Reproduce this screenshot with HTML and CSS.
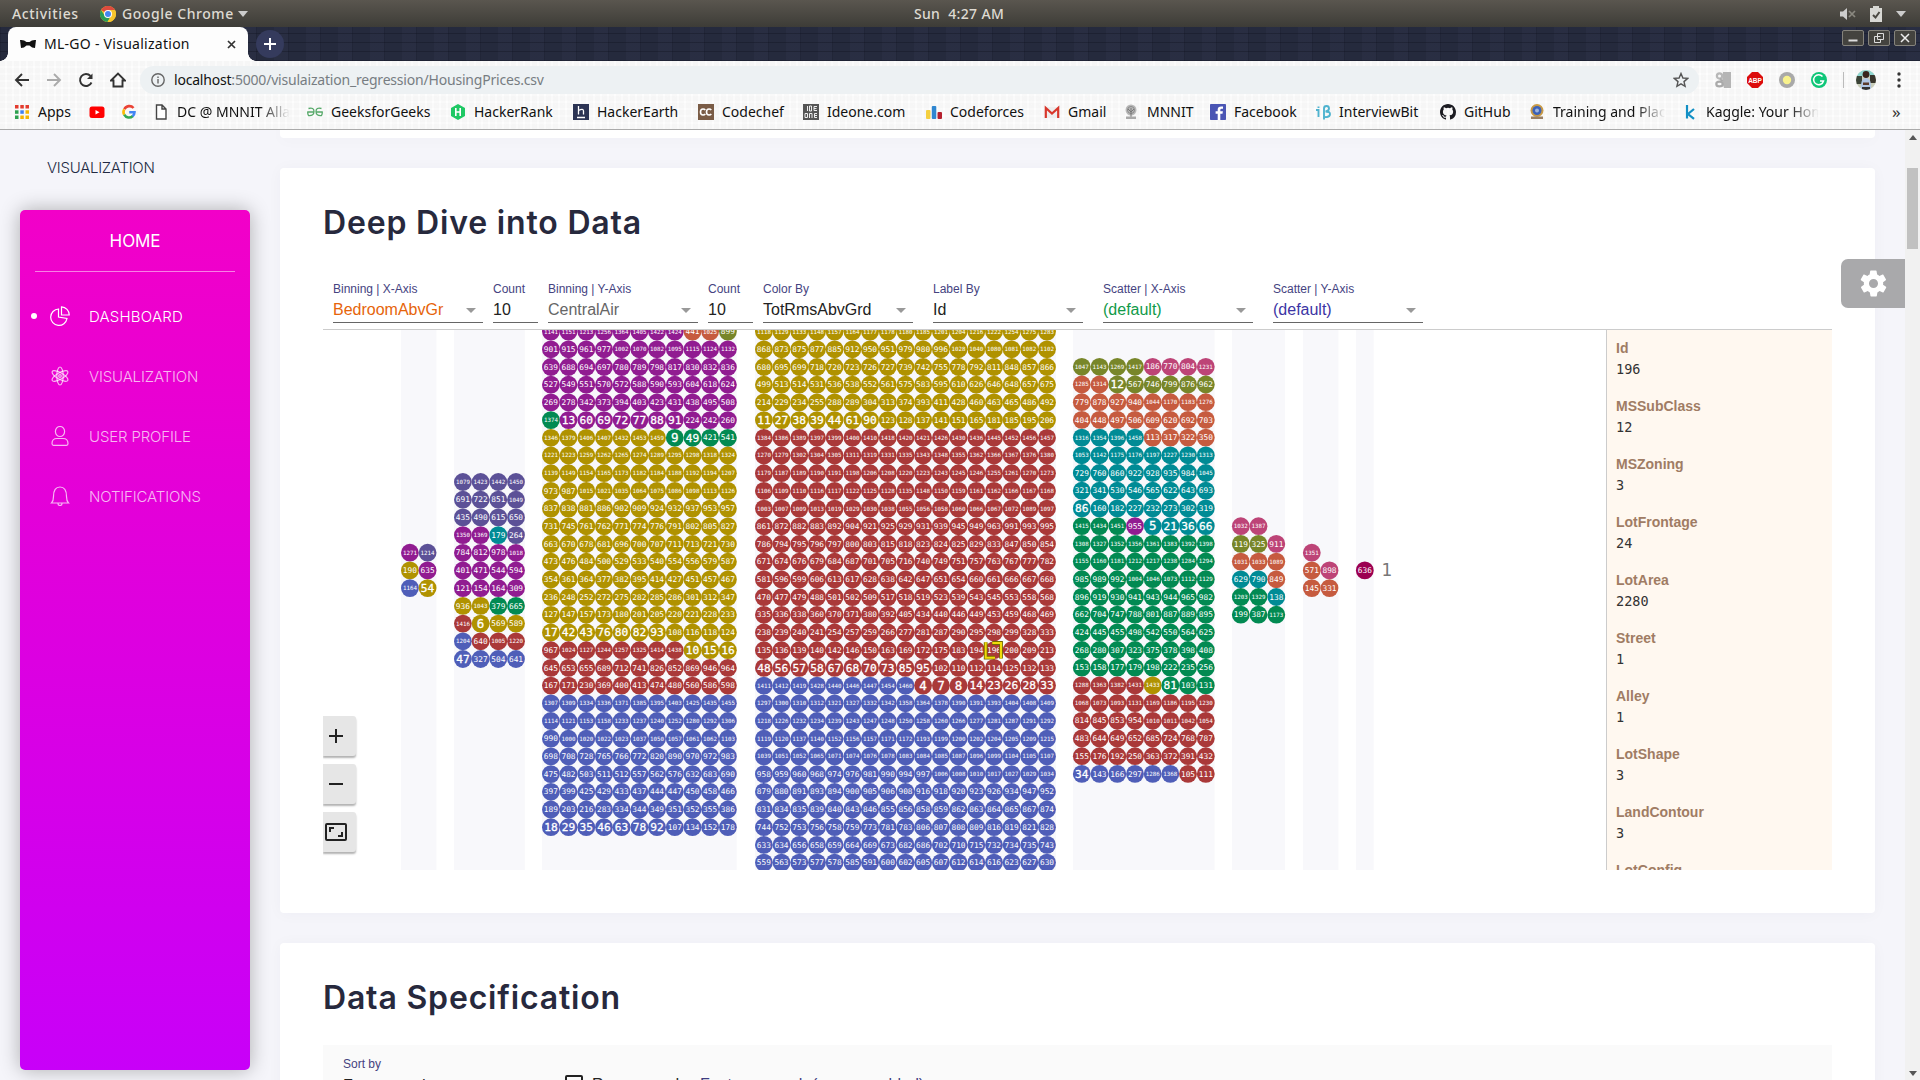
FILE: index.html
```html
<!DOCTYPE html>
<html lang="en">
<head>
<meta charset="utf-8">
<title>ML-GO - Visualization</title>
<link rel="stylesheet" href="styles.css">
</head>
<body>
<header class="topbar">
  <div class="top-left">
    <span class="activities">Activities</span>
    <svg class="chrome" viewBox="0 0 16 16"><circle cx="8" cy="8" r="8" fill="#f7c52d"/><path d="M8 8 1 4A8 8 0 0 1 15 4H8Z" fill="#dd4b3e"/><path d="M1 4A8 8 0 0 0 7.500 16L11 10 5 10Z" fill="#2a9d56"/><path d="M8 4H15A8 8 0 0 1 7.500 16L11 10Z" fill="#f7c52d"/><circle cx="8" cy="8" r="4" fill="#fff"/><circle cx="8" cy="8" r="3" fill="#4687f0"/></svg>
    <span class="appname">Google Chrome</span>
    <i class="caret"></i>
  </div>
  <span class="clock">Sun&nbsp; 4:27 AM</span>
  <div class="top-right">
    <svg class="vol" width="18" height="14" viewBox="0 0 18 14"><path d="M1 4.500H4L8 1V13L4 9.500H1Z" fill="#ccc"/><path d="m10 4 6 6m0-6-6 6" stroke="#8a8880" stroke-width="1.700"/></svg>
    <svg class="batt" width="12" height="16" viewBox="0 0 12 16"><path d="M3 0H9V2H12V16H0V2H3Z" fill="#d8d8d4"/><path d="m3 9 2.500 2.500L9.500 6" fill="none" stroke="#4a4842" stroke-width="2"/></svg>
    <i class="caret"></i>
  </div>
</header>
<div class="tabstrip">
  <div class="tab">
    <svg width="16" height="10" viewBox="0 0 16 10"><path d="M0 1Q4 .5 6.500 3H9.500Q12 .5 16 1L15 9Q12 9 9.500 6.500H6.500Q4 9 1 9Z" fill="#111"/></svg>
    <span class="tabtitle">ML-GO - Visualization</span>
    <svg class="tabclose" width="9" height="9" viewBox="0 0 9 9"><path d="m1 1 7 7m0-7-7 7" stroke="#333" stroke-width="1.700"/></svg>
  </div>
  <div class="newtab"><svg width="12" height="12" viewBox="0 0 12 12"><path d="M6 0V12M0 6H12" stroke="#fff" stroke-width="2"/></svg></div>
  <div class="winbtns">
    <span class="wb"><svg viewBox="0 0 12 12"><path d="M1.500 8.500H10.500" stroke="#ddd" stroke-width="2"/></svg></span>
    <span class="wb"><svg viewBox="0 0 12 12" fill="none" stroke="#ddd"><path d="M4.500 1.500H10.500V7.500H4.500ZM7.500 7.500V10.500H1.500V4.500H7.500"/></svg></span>
    <span class="wb"><svg viewBox="0 0 12 12"><path d="m2 2 8 8m0-8-8 8" stroke="#eee" stroke-width="1.500"/></svg></span>
  </div>
</div>
<div class="chromebar">
  <div class="navrow">
    <svg class="nav" viewBox="0 0 16 16"><path d="M15 8H2M8 2 2 8l6 6" /></svg>
    <svg class="nav dim" viewBox="0 0 16 16"><path d="M1 8H14M8 2l6 6-6 6"/></svg>
    <svg class="nav" viewBox="0 0 16 16"><path d="M13.500 10.500A6 6 0 1 1 12.500 4"/><path d="M14.500 1.500V7H9Z" fill="#333" stroke="none"/></svg>
    <svg class="nav" viewBox="0 0 16 16"><path d="M1 8.500 8 1.500l7 7H12.500V14.500H3.500V8.500Z"/></svg>
    <div class="urlbar">
      <svg width="14" height="14" viewBox="0 0 14 14" fill="none" stroke="#666" stroke-width="1.400"><circle cx="7" cy="7" r="6.200"/><path d="M7 6V10.500M7 3.400V5"/></svg>
      <span class="url"><b>localhost</b>:5000/visulaization_regression/HousingPrices.csv</span>
      <svg class="star" width="16" height="16" viewBox="0 0 16 16"><path d="m8 1.500 1.900 4.500 4.800.4-3.700 3.200 1.100 4.700L8 11.800l-4.100 2.500L5 9.600 1.300 6.400 6.100 6Z" fill="none" stroke="#555" stroke-width="1.400"/></svg>
    </div>
    <div class="exts">
      <svg viewBox="0 0 16 16"><path d="M8 0H16V16H9L7 10Z" fill="#b5b5b5"/><circle cx="4.500" cy="4" r="2.600" fill="none" stroke="#b8b8b8" stroke-width="2.200"/><ellipse cx="4.500" cy="12" rx="3.200" ry="2.400" fill="none" stroke="#aaa" stroke-width="2.200"/><path d="M5 6.500 7 8.500 5 9.500" fill="none" stroke="#aaa" stroke-width="1.500"/></svg>
      <svg viewBox="0 0 16 16"><path d="M5 0H11L16 5V11L11 16H5L0 11V5Z" fill="#dc0c0c"/><text x="8" y="10.800" text-anchor="middle" class="abp">ABP</text></svg>
      <svg viewBox="0 0 16 16"><circle cx="8" cy="8" r="8" fill="#a9a9a9"/><circle cx="8" cy="8" r="4.200" fill="#f8f28c"/></svg>
      <svg viewBox="0 0 16 16"><circle cx="8" cy="8" r="8" fill="#0fc678"/><path d="M11.500 4.500A5 5 0 1 0 12.500 9H9" fill="none" stroke="#fff" stroke-width="1.500"/></svg>
    </div>
    <i class="vsep"></i>
    <svg class="avatar" viewBox="0 0 20 20"><defs><clipPath id="av"><circle cx="10" cy="10" r="10"/></clipPath></defs><g clip-path="url(#av)"><rect width="20" height="20" fill="#c9cdb9"/><rect width="20" height="6" fill="#8fd6d0"/><rect x="0" y="6" width="6" height="8" fill="#3c4438"/><rect x="14" y="5" width="6" height="8" fill="#39352c"/><circle cx="10" cy="4.500" r="3.400" fill="#38241c"/><path d="M5 20Q4 8 10 8T15 20Z" fill="#b0c6e3"/><path d="M7 12.500h6v2.500H7Z" fill="#5a3b2c"/><path d="M6 17h8v3H6Z" fill="#333"/></g></svg>
    <svg class="kebab" width="4" height="16" viewBox="0 0 4 16" fill="#333"><circle cx="2" cy="2" r="1.700"/><circle cx="2" cy="8" r="1.700"/><circle cx="2" cy="14" r="1.700"/></svg>
  </div>
  <nav class="bookmarks">
    <a class="bm w-apps"><svg viewBox="0 0 16 16"><g fill="#e33b2e"><path d="M1 1h3.500v3.500H1zM6.300 1h3.500v3.500H6.300zM11.500 1H15v3.500h-3.500z"/></g><path d="M1 6.300h3.500v3.500H1z" fill="#2da14f"/><path d="M6.300 6.300h3.500v3.500H6.300z" fill="#4080f0"/><path d="M11.500 6.300H15v3.500h-3.500zM6.300 11.500h3.500V15H6.300zM11.500 11.500H15V15h-3.500z" fill="#f5b400"/><path d="M1 11.500h3.500V15H1z" fill="#2da14f"/></svg><span>Apps</span></a>
    <a class="bm w-yt"><svg viewBox="0 0 16 16"><rect y="2.500" x=".5" width="15" height="11.500" rx="2.500" fill="#f00"/><path d="m6.500 6 4 2.300-4 2.300Z" fill="#fff"/></svg></a>
    <a class="bm w-gg"><svg viewBox="0 0 16 16" fill="none" stroke-width="2.600"><path d="M12.500 4A5.500 5.500 0 0 0 3.400 5.200" stroke="#ea4335"/><path d="M3.200 5.300a5.500 5.500 0 0 0 0 5.400" stroke="#fbbc05"/><path d="M3.200 10.700a5.500 5.500 0 0 0 8.600 1.300" stroke="#34a853"/><path d="M11.600 12.200A5.500 5.500 0 0 0 13.500 8.200H8.200" stroke="#4285f4"/></svg></a>
    <a class="bm fade w-dc"><svg viewBox="0 0 16 16"><path d="M3.500 1H9l4 4V15H3.500ZM9 1V5h4" fill="#fff" stroke="#444" stroke-width="1.400"/></svg><span>DC @ MNNIT Alla</span></a>
    <a class="bm w-gfg"><svg viewBox="0 0 16 16" fill="none" stroke="#55a868" stroke-width="1.300"><path d="M1.500 4.500Q7 3 7 7.500T1.500 11.500Q.5 9.500.8 8H7M14.500 4.500Q9 3 9 7.500t5.500 4Q15.500 9.500 15.200 8H9"/></svg><span>GeeksforGeeks</span></a>
    <a class="bm w-hr"><svg viewBox="0 0 16 16"><path d="m8 0 7 4v8l-7 4-7-4V4Z" fill="#1ec864"/><path d="M5.800 4V12M10.200 4V12M5.800 8h4.400" stroke="#fff" stroke-width="1.600"/></svg><span>HackerRank</span></a>
    <a class="bm w-he"><svg viewBox="0 0 16 16"><rect width="16" height="16" fill="#2c3454"/><path d="M5.500 2V10.500M5.500 6.500Q10.500 4 10.500 7V10.500M4 13.500h8" stroke="#fff" stroke-width="1.300" fill="none"/></svg><span>HackerEarth</span></a>
    <a class="bm w-cc"><svg viewBox="0 0 16 16"><rect width="16" height="16" fill="#7a5c46"/><path d="M7.300 6Q6.500 5 5 5 2.500 5 2.500 8T5 11q1.500 0 2.300-1M13.300 6Q12.500 5 11 5 8.500 5 8.500 8T11 11q1.500 0 2.300-1" stroke="#fff" stroke-width="1.600" fill="none"/></svg><span>Codechef</span></a>
    <a class="bm w-id"><svg viewBox="0 0 16 16"><rect width="16" height="16" fill="#555"/><path d="M4.500 2V7M6.500 2V7H8.500V2ZM14 2.500H11V6.500H14M11 4.500h2.500M2 9.500H4.500V13.500H2ZM6.500 14V9.500H9V14M14 9.500H11.500V13.500H14M11.500 11.500H14" fill="none" stroke="#eee" stroke-width="1"/></svg><span>Ideone.com</span></a>
    <a class="bm w-cf"><svg viewBox="0 0 16 16"><rect y="6" width="4.500" height="9" rx="1" fill="#f4cf3f"/><rect x="5.800" y="2" width="4.500" height="13" rx="1" fill="#2f86d0"/><rect x="11.500" y="8" width="4.500" height="7" rx="1" fill="#b5202e"/></svg><span>Codeforces</span></a>
    <a class="bm w-gm"><svg viewBox="0 0 16 16"><path d="M1 3H15V14H1Z" fill="#eee"/><path d="M1.800 14V4L8 9.500 14.200 4V14" fill="none" stroke="#d8372c" stroke-width="2.200"/></svg><span>Gmail</span></a>
    <a class="bm w-mn"><svg viewBox="0 0 16 16"><circle cx="8" cy="6" r="5.500" fill="#b9b9b9"/><circle cx="8" cy="6" r="3.500" fill="none" stroke="#888"/><path d="M8 4v9M5 5l3 3 3-3" stroke="#777" fill="none"/><path d="M3 12.500h10V15H3Z" fill="#a9a9a9"/></svg><span>MNNIT</span></a>
    <a class="bm w-fb"><svg viewBox="0 0 16 16"><rect width="16" height="16" rx=".8" fill="#4a55b4"/><path d="M10.300 16V9.800h2.200l.4-2.500h-2.600V6q0-1.200 1.300-1.200H13V2.600Q7.700 1.700 7.700 5.600V7.300H5.600V9.800H7.700V16Z" fill="#fff"/></svg><span>Facebook</span></a>
    <a class="bm w-ib"><svg viewBox="0 0 16 16" fill="none" stroke="#4fb3cf" stroke-width="1.900"><path d="M1 6H3.500V13M3.500 2.500V4M9 15.500V4.500Q9 2 11.500 2T14 4.500 10.500 7.500Q15 7.500 15 10T12 13 9 11.500"/></svg><span>InterviewBit</span></a>
    <a class="bm w-gh"><svg viewBox="0 0 16 16"><path d="M8 0C3.580 0 0 3.580 0 8c0 3.540 2.290 6.530 5.470 7.590.4.070.55-.17.55-.38 0-.19-.01-.82-.01-1.490-2.010.37-2.530-.49-2.690-.94-.09-.23-.48-.94-.82-1.130-.28-.15-.68-.52-.01-.53.63-.01 1.080.58 1.230.82.72 1.210 1.870.87 2.330.66.07-.52.28-.87.51-1.070-1.780-.2-3.640-.89-3.640-3.950 0-.87.31-1.590.82-2.150-.08-.2-.36-1.020.08-2.120 0 0 .67-.21 2.200.82a7.600 7.600 0 0 1 4 0c1.530-1.040 2.200-.82 2.200-.82.44 1.100.16 1.920.08 2.120.51.56.82 1.270.82 2.150 0 3.070-1.870 3.750-3.650 3.950.29.25.54.73.54 1.480 0 1.070-.01 1.930-.01 2.200 0 .21.15.46.55.38A8 8 0 0 0 16 8c0-4.420-3.580-8-8-8Z" fill="#1c1c22"/></svg><span>GitHub</span></a>
    <a class="bm fade w-tr"><svg viewBox="0 0 16 16"><circle cx="8" cy="6.500" r="6.500" fill="#c99a45"/><circle cx="8" cy="6.500" r="4.500" fill="#3c62b8"/><circle cx="8" cy="6.500" r="2" fill="#9fb4dd"/><path d="M2 12.500h12V15H2Z" fill="#9a7f62"/></svg><span>Training and Plac</span></a>
    <a class="bm fade w-kg"><svg viewBox="0 0 16 16"><path d="M5 1V14.500M12 5 6 10l6 4.800" fill="none" stroke="#128fc4" stroke-width="2.200"/></svg><span>Kaggle: Your Hom</span></a>
    <span class="more">»</span>
  </nav>
</div>
<div class="page">
  <aside class="side">
    <div class="crumb">VISUALIZATION</div>
    <div class="menu">
      <div class="home">HOME</div>
      <a class="mi on"><i class="bullet"></i><svg viewBox="0 0 20 20"><path d="M8.500 3A8.200 8.200 0 1 0 17 12.500L8.500 11ZM11.500.8V9H19.200A8 8 0 0 0 11.500.8Z"/></svg><span>DASHBOARD</span></a>
      <a class="mi"><i class="bullet"></i><svg viewBox="0 0 20 20"><ellipse cx="10" cy="10" rx="3.200" ry="9"/><ellipse cx="10" cy="10" rx="3.200" ry="9" transform="rotate(60 10 10)"/><ellipse cx="10" cy="10" rx="3.200" ry="9" transform="rotate(120 10 10)"/><circle cx="10" cy="10" r="1.300"/></svg><span>VISUALIZATION</span></a>
      <a class="mi"><i class="bullet"></i><svg viewBox="0 0 20 20"><ellipse cx="10" cy="5.500" rx="4.600" ry="5"/><path d="M2 17.500Q2 12.500 7 12.500h6q5 0 5 5Q18 19.300 16.500 19.300h-13Q2 19.300 2 17.500Z"/></svg><span>USER PROFILE</span></a>
      <a class="mi"><i class="bullet"></i><svg viewBox="0 0 20 20"><path d="M1.500 17Q3.500 15 3.500 10.500 3.500 1 10 1t6.500 9.500Q16.500 15 18.500 17ZM8 17.500a2 2 0 0 0 4 0"/></svg><span>NOTIFICATIONS</span></a>
    </div>
  </aside>
  <main class="main">
    <section class="card prev"></section>
    <section class="card dive">
      <h2>Deep Dive into Data</h2>
      <div class="controls">
        <div class="f sel"><label>Binning | X-Axis</label><p class="orange">BedroomAbvGr<i></i></p></div>
        <div class="f num"><label>Count</label><p>10</p></div>
        <div class="f sel"><label>Binning | Y-Axis</label><p class="gray">CentralAir<i></i></p></div>
        <div class="f num"><label>Count</label><p>10</p></div>
        <div class="f sel wide"><label>Color By</label><p>TotRmsAbvGrd<i></i></p></div>
        <div class="f sel wide"><label>Label By</label><p>Id<i></i></p></div>
        <div class="f sel wide"><label>Scatter | X-Axis</label><p class="green">(default)<i></i></p></div>
        <div class="f sel wide"><label>Scatter | Y-Axis</label><p class="indigo">(default)<i></i></p></div>
      </div>
      <div class="plot">
        <div class="canvas">
          <svg id="dots" width="1283" height="540" viewBox="323 330 1283 540"></svg>
          <div class="zoom">
            <button><svg viewBox="0 0 24 24"><path d="M12 5V19M5 12H19"/></svg></button>
            <button><svg viewBox="0 0 24 24"><path d="M5 12H19"/></svg></button>
            <button><svg viewBox="0 0 24 24"><rect x="2" y="4" width="20" height="16" rx="1"/><path d="M6 12V8h4M18 12v4h-4"/></svg></button>
          </div>
        </div>
        <dl class="info">
          <dt>Id</dt><dd>196</dd>
          <dt>MSSubClass</dt><dd>12</dd>
          <dt>MSZoning</dt><dd>3</dd>
          <dt>LotFrontage</dt><dd>24</dd>
          <dt>LotArea</dt><dd>2280</dd>
          <dt>Street</dt><dd>1</dd>
          <dt>Alley</dt><dd>1</dd>
          <dt>LotShape</dt><dd>3</dd>
          <dt>LandContour</dt><dd>3</dd>
          <dt>LotConfig</dt>
        </dl>
      </div>
    </section>
    <section class="card spec">
      <h2>Data Specification</h2>
      <div class="overview">
        <div class="sortlabel">Sort by</div>
        <div class="sortrow"><span class="order">Feature order</span><i class="check"></i><span class="rev">Reverse order</span><span class="search">Feature search (regex enabled)</span></div>
      </div>
    </section>
  </main>
  <div class="scroll"><i class="up"></i><b></b><i class="down"></i></div>
  <div class="gear"><svg viewBox="0 0 24 24"><path d="m19.400 13 .1-1-.1-1 2.100-1.600c.2-.2.3-.5.100-.7l-2-3.400c-.1-.2-.4-.3-.6-.2l-2.500 1q-.8-.6-1.700-1l-.4-2.600c0-.3-.2-.5-.5-.5h-4c-.3 0-.5.2-.5.500l-.4 2.600q-.9.400-1.700 1l-2.500-1c-.2-.1-.5 0-.6.200l-2 3.400c-.1.200-.1.500.1.700L4.600 11l-.1 1 .1 1-2.100 1.600c-.2.200-.3.500-.1.700l2 3.400c.1.200.4.300.6.200l2.500-1q.8.600 1.700 1l.4 2.600c0 .3.200.5.500.5h4c.3 0 .5-.2.500-.5l.4-2.600q.9-.4 1.700-1l2.500 1c.2.100.5 0 .6-.2l2-3.400c.1-.2.1-.5-.1-.7ZM12 15.500a3.500 3.500 0 1 1 0-7 3.500 3.500 0 0 1 0 7Z" fill="#fff"/></svg></div>
</div>
<script src="plot.js"></script>
</body>
</html>
```
FILE: plot.js
```js
// Each facet is a column of the binned plot. Rows run top to bottom;
// a letter switches the colour for the ids that follow it.
const COLORS = {
  b: '#4f5eb8', r: '#aa3939', y: '#b09200', g: '#028a52', t: '#008b95',
  p: '#911c91', i: '#5c5197', l: '#788629', o: '#c65b3f', k: '#bd4477', m: '#9c0051'
};
const PITCH = 17.7;
const SIZES = [0, 12.5, 11.2, 7.8, 5.8];
const FACETS = [
  { x: 401, n: 2, y: 552.7, rows: `p 1271 i 1214
y 190 p 635
b 1164 y 54` },
  { x: 454, n: 4, y: 482, rows: `i 1079 1423 1442 1450
i 691 722 851 1049
i 435 490 615 650
p 1350 1369 t 179 i 264
p 784 812 978 1018
p 401 471 544 594
p 121 154 164 309
y 936 1043 g 379 665
r 1416 y 6 569 589
b 1204 r 640 1005 1220
b 47 327 504 641` },
  { x: 542, n: 11, y: 331.6, rows: `p 1141 1151 1213 1256 1364 1405 1422 1424 o 441 1025 l 899
p 901 915 961 977 1002 1070 1082 1095 1115 1124 1132
p 639 688 694 697 780 789 798 817 830 832 836
p 527 549 551 570 572 588 590 593 604 618 624
p 269 278 342 373 394 403 423 431 438 495 508
g 1374 p 13 60 69 72 77 88 91 224 242 260
y 1346 1379 1406 1407 1432 1453 1459 g 9 49 421 541
y 1221 1223 1259 1262 1265 1274 1289 1295 1298 1318 1324
y 1139 1149 1154 1165 1173 1182 1184 1188 1192 1194 1207
y 973 987 1015 1021 1035 1064 1075 1086 1098 1113 1126
y 837 838 881 886 902 909 924 932 937 953 957
y 731 745 761 762 771 774 776 791 802 805 827
y 663 670 678 681 696 700 707 711 713 721 730
y 473 476 484 500 529 533 540 554 556 579 587
y 354 361 364 377 382 395 414 427 451 457 467
y 236 248 252 272 275 282 285 286 301 312 347
y 127 147 157 173 180 201 205 220 221 228 233
y 17 42 43 76 80 82 93 108 116 118 124
r 967 1024 1127 1244 1257 1325 1414 1438 y 10 15 16
r 645 653 655 689 712 741 826 852 869 946 964
r 167 171 230 369 400 413 474 480 560 586 598
b 1307 1309 1334 1336 1371 1385 1395 1403 1425 1435 1455
b 1114 1121 1153 1158 1233 1237 1240 1252 1280 1292 1306
b 990 1000 1020 1022 1023 1037 1050 1057 1061 1062 1103
b 698 708 728 765 766 772 820 890 970 972 983
b 475 482 503 511 512 557 562 576 632 683 690
b 397 399 425 429 433 437 444 447 450 458 466
b 189 203 216 283 334 344 349 351 352 355 386
b 18 29 35 46 63 78 92 107 134 152 178` },
  { x: 755, n: 17, y: 331.6, rows: `y 1118 1129 1133 1148 1157 1164 1177 1178 1180 1185 1201 1204 1216 1222 1254 1275 1283
y 868 873 875 877 885 912 950 951 979 980 996 1028 1040 1080 1081 1082 1102
y 680 695 699 718 720 723 726 727 739 742 755 778 792 811 848 857 866
y 499 513 514 531 536 538 552 561 575 583 595 610 626 646 648 657 675
y 214 229 234 255 288 289 304 313 374 393 411 428 460 463 465 486 492
y 11 27 38 39 44 61 90 123 128 137 141 151 165 181 185 195 206
r 1384 1386 1389 1397 1399 1400 1410 1418 1420 1421 1426 1430 1436 1445 1452 1456 1457
r 1270 1279 1302 1304 1305 1311 1319 1331 1335 1343 1348 1355 1362 1366 1367 1376 1380
r 1179 1187 1189 1190 1191 1198 1206 1208 1220 1223 1243 1245 1246 1255 1261 1270 1273
r 1106 1109 1110 1116 1117 1122 1125 1128 1135 1148 1150 1159 1161 1162 1166 1167 1168
r 1003 1007 1009 1013 1019 1029 1030 1038 1055 1056 1058 1060 1066 1067 1072 1089 1097
r 861 872 882 883 892 904 921 925 929 931 939 945 949 963 991 993 995
r 786 794 795 796 797 800 803 815 818 823 824 825 829 833 847 850 854
r 671 674 676 679 684 687 701 705 716 740 749 751 757 763 767 777 782
r 581 596 599 606 613 617 628 638 642 647 651 654 660 661 666 667 668
r 470 477 479 488 501 502 509 517 518 519 523 539 543 545 553 558 568
r 335 336 338 360 370 371 380 392 405 434 440 446 449 453 459 468 469
r 238 239 240 241 254 257 259 266 277 281 287 290 295 298 299 328 333
r 135 136 139 140 142 146 150 163 169 172 175 183 194 196 200 209 213
r 48 56 57 58 67 68 70 73 85 95 102 110 112 114 125 132 133
b 1411 1412 1419 1428 1440 1446 1447 1454 1460 r 4 7 8 14 23 26 28 33
b 1297 1300 1310 1312 1321 1327 1332 1342 1358 1364 1378 1390 1391 1393 1404 1408 1409
b 1218 1226 1232 1234 1239 1243 1247 1248 1250 1258 1260 1266 1277 1281 1287 1291 1292
b 1119 1120 1137 1140 1152 1156 1157 1171 1172 1193 1199 1200 1202 1204 1205 1209 1215
b 1039 1051 1052 1065 1071 1074 1076 1078 1083 1084 1085 1087 1096 1099 1104 1105 1107
b 958 959 960 968 974 976 981 990 994 997 1006 1008 1010 1017 1027 1029 1034
b 879 880 891 893 894 900 905 906 908 916 918 920 923 926 934 947 952
b 831 834 835 839 840 843 846 855 856 858 859 862 863 864 865 867 874
b 744 752 753 756 758 759 773 781 783 806 807 808 809 816 819 821 828
b 633 634 656 658 659 664 669 673 682 686 702 710 715 732 734 735 743
b 559 563 573 577 578 585 591 600 602 605 607 612 614 616 623 627 630` },
  { x: 1073, n: 8, y: 366.8, rows: `l 1047 1143 1269 1417 k 186 770 804 1231
o 1285 1314 l 12 567 746 799 876 962
o 779 878 927 940 1044 1170 1183 1276
o 404 448 497 506 609 620 692 703
t 1316 1354 1396 1458 o 113 317 322 350
t 1053 1142 1175 1176 1197 1227 1230 1313
t 729 760 860 922 928 935 984 1045
t 321 341 530 546 565 622 643 693
t 86 160 182 227 232 273 302 319
g 1415 1434 1451 p 955 t 5 21 36 66
g 1308 1327 1352 1356 1361 1383 1392 1398
g 1155 1160 1181 1212 1217 1238 1284 1294
g 985 989 992 1004 1046 1073 1112 1129
g 896 919 930 941 943 944 965 982
g 662 704 747 788 801 887 889 895
g 424 445 455 498 542 550 564 625
g 268 280 307 323 375 378 398 408
g 153 158 177 179 198 222 235 256
r 1288 1363 1382 1431 y 1433 g 81 103 131
r 1068 1073 1093 1131 1169 1186 1195 1230
r 814 845 853 954 1010 1011 1042 1054
r 483 644 649 652 685 724 768 787
r 155 176 192 250 363 372 391 432
b 34 143 166 297 1286 1368 r 105 111` },
  { x: 1232, n: 3, y: 526.2, rows: `k 1032 1387
l 119 325 k 911
o 1031 1033 1089
t 629 790 o 849
g 1203 1329 t 138
g 199 387 1173` },
  { x: 1303, n: 2, y: 552.7, rows: `k 1351
o 571 k 898
o 145 331` },
  { x: 1356, n: 1, y: 570.4, rows: `m 636` }
];

let out = '';
for (const f of FACETS) {
  out += `<rect class="band" x="${f.x}" y="330" width="${f.n * PITCH}" height="540"/>`;
  f.rows.split('\n').forEach((row, r) => {
    let color, c = 0;
    const cy = f.y + r * PITCH;
    for (const tok of row.trim().split(/\s+/)) {
      if (COLORS[tok]) { color = COLORS[tok]; continue; }
      const cx = f.x + (c++ + 0.5) * PITCH;
      const s = SIZES[tok.length];
      const cls = tok.length < 3 ? ' class="big"' : '';
      out += `<circle cx="${cx.toFixed(1)}" cy="${cy.toFixed(1)}" r="8.9" fill="${color}"/>` +
        `<text${cls} x="${cx.toFixed(1)}" y="${(cy + s * 0.33).toFixed(1)}" font-size="${s}">${tok}</text>`;
    }
  });
}
const bracket = 'M985.700 642.300V657.700H995M992.300 643H1001V658.500';
out += `<path d="${bracket}" class="pick-edge"/><path d="${bracket}" class="pick"/>`;
out += '<text class="axis" x="1387" y="576">1</text>';
document.getElementById('dots').innerHTML = out;
```
FILE: styles.css
```css
* { box-sizing: border-box; }
body { margin: 0; width: 1920px; height: 1080px; overflow: hidden; display: flex; flex-direction: column; font-family: "Noto Sans", "Open Sans", sans-serif; background: #f5f5fa; }
h2, p, dl, dd { margin: 0; }
svg { flex: none; display: block; }

.topbar { height: 27px; flex: none; padding: 0 14px 0 12px; background: linear-gradient(#5a564f, #3d3c37); color: #dedad2; display: grid; grid-template-columns: 1fr auto 1fr; align-items: center; font: 500 14px "Noto Sans", sans-serif; line-height: 26px; }
.top-left, .top-right { display: flex; align-items: center; }
.activities { width: 88px; letter-spacing: .65px; }
.chrome { width: 16px; height: 16px; margin-right: 6px; }
.appname { width: 116px; letter-spacing: .55px; }
.caret { border: 5px solid transparent; border-top: 6px solid #ccc; border-bottom: 0; }
.clock { letter-spacing: .35px; }
.top-right { justify-content: flex-end; gap: 14px; }
.vol { margin-right: -1px; }

.tabstrip { height: 34px; flex: none; padding-left: 8px; display: flex; align-items: flex-start; background-color: #252a3d; background-image: repeating-linear-gradient(0deg, rgba(10,12,24,.3) 0 1px, transparent 1px 9px), repeating-linear-gradient(90deg, rgba(10,12,24,.14) 0 1px, transparent 1px 18px, rgba(70,74,105,.12) 18px 32px); }
.tab { position: relative; width: 240px; height: 34px; background: #fdfdfd; border-radius: 8px 8px 0 0; padding: 0 12px; display: flex; align-items: center; }
.tab::before, .tab::after { content: ""; position: absolute; bottom: 0; width: 8px; height: 8px; }
.tab::before { left: -8px; background: radial-gradient(circle at 0 0, transparent 7.5px, #fdfdfd 8px); }
.tab::after { right: -8px; background: radial-gradient(circle at 100% 0, transparent 7.5px, #fdfdfd 8px); }
.tabtitle { margin-left: 8px; padding-bottom: 2px; font-size: 14px; letter-spacing: .27px; color: #111; flex: 1; white-space: nowrap; }
.newtab { width: 28px; height: 28px; margin: 3px 0 0 8px; border-radius: 50%; background: #353b5d; display: flex; align-items: center; justify-content: center; }
.winbtns { margin: 3px 4px 0 auto; display: flex; gap: 4px; }
.wb { width: 22px; height: 16px; background: #44433f; border: 1px solid #85837c; border-radius: 2px; display: flex; align-items: center; justify-content: center; }
.wb svg { width: 12px; height: 12px; }

.chromebar { height: 69px; flex: none; border-bottom: 1px solid #aaa; background-color: #fdfdfd; background-image: repeating-linear-gradient(0deg, rgba(0,0,0,.012) 0 5px, transparent 5px 7px), repeating-linear-gradient(90deg, rgba(0,0,0,.016) 0 5px, transparent 5px 7px); }
.navrow { height: 37px; padding: 0 19px 0 14px; display: flex; align-items: center; }
.nav { width: 16px; height: 16px; margin-right: 16px; fill: none; stroke: #333; stroke-width: 1.9; }
.nav.dim { stroke: #aaa; }
.urlbar { width: 1559px; height: 28px; margin-left: -2px; border-radius: 14px; background: #edf1f3; display: flex; align-items: center; padding: 0 10px 0 11px; }
.url { margin-left: 9px; font-size: 14px; color: #777d82; letter-spacing: -.2px; flex: 1; }
.url b { font-weight: 400; color: #111; }
.exts { display: flex; gap: 16px; margin-left: 16px; }
.exts svg { width: 16px; height: 16px; }
.abp { font: 700 6.5px "Liberation Sans", sans-serif; fill: #fff; }
.vsep { width: 1px; height: 16px; margin-left: 16px; background: #bbb; }
.avatar { width: 20px; height: 20px; margin-left: 12px; }
.kebab { margin-left: auto; }
.bookmarks { height: 27px; display: flex; align-items: center; padding-left: 14px; font-size: 14px; color: #111; }
.bm { display: flex; align-items: center; gap: 8px; flex: none; white-space: nowrap; height: 24px; }
.bm svg { width: 16px; height: 16px; }
.w-apps { width: 75px; } .w-yt { width: 32px; } .w-gg { width: 32px; } .w-dc { width: 154px; }
.w-gfg { width: 143px; } .w-hr { width: 123px; } .w-he { width: 125px; } .w-cc { width: 105px; }
.w-id { width: 123px; } .w-cf { width: 118px; } .w-gm { width: 79px; } .w-mn { width: 87px; }
.w-fb { width: 105px; } .w-ib { width: 125px; } .w-gh { width: 89px; } .w-tr { width: 153px; } .w-kg { width: 150px; }
.fade span { width: 115px; -webkit-mask-image: linear-gradient(90deg, #000 72%, transparent 98%); mask-image: linear-gradient(90deg, #000 72%, transparent 98%); }
.more { margin-left: 60px; font-size: 17px; line-height: 20px; color: #333; }

.page { position: relative; flex: 1; min-height: 0; overflow: hidden; display: flex; background: #f5f5fa; font-family: Inter, sans-serif; }
.side { width: 280px; flex: none; padding: 28px 30px 0 20px; }
.crumb { height: 20px; margin: 0 0 32px 27px; font: 300 15px/20px Inter, sans-serif; letter-spacing: -.28px; color: #222a42; }
.menu { height: 860px; border-radius: 5px; padding: 0 15px; background: linear-gradient(#f200c8, #c800f8); box-shadow: 0 0 20px rgba(0,0,0,.3); color: #fff; }
.home { height: 62px; border-bottom: 1px solid rgba(255,255,255,.5); text-align: center; font: 400 17px/62px Inter, sans-serif; letter-spacing: -.1px; margin-bottom: 14px; }
.mi { height: 60px; display: flex; align-items: center; font-weight: 300; font-size: 15px; letter-spacing: -.15px; color: rgba(255,255,255,.72); margin-left: -4px; white-space: nowrap; }
.mi.on { color: #fff; letter-spacing: .2px; }
.mi svg { width: 20px; height: 20px; margin: 0 19px 0 13px; fill: none; stroke: currentColor; stroke-width: 1.2; }
.bullet { width: 6px; height: 6px; border-radius: 50%; }
.on .bullet { background: #fff; }
.main { width: 1595px; flex: none; display: flex; flex-direction: column; gap: 30px; }
.card { flex: none; background: #fff; border-radius: 4px; box-shadow: 0 1px 15px rgba(30,30,80,.035); padding: 0 43px; }
.prev { height: 8px; border-radius: 0 0 4px 4px; }
.dive { height: 745px; }
h2 { padding-top: 31px; height: 112px; font: 600 32px/48px Inter, sans-serif; letter-spacing: .82px; color: #27293d; }
.controls { height: 50px; padding-left: 10px; display: flex; border-bottom: 1px solid #ccc; font-family: "Liberation Sans", Arial, sans-serif; }
.f { margin-right: 10px; width: 150px; }
.f.num { width: 45px; }
.f.wide { margin-right: 20px; }
.f label { display: block; font-size: 12px; line-height: 18px; color: #45437f; }
.f p { height: 25px; border-bottom: 1px solid #666; font-size: 16px; line-height: 21px; padding-bottom: 2px; color: #222; display: flex; justify-content: space-between; align-items: center; }
.f p i { border: 5px solid transparent; border-top-color: #999; border-bottom: 0; margin: 2px 7px 0 0; }
.f .orange { color: #e6640a; } .f .gray { color: #666; } .f .green { color: #119a49; } .f .indigo { color: #3c34a4; }
.plot { height: 540px; display: flex; overflow: hidden; }
.canvas { position: relative; width: 1283px; flex: none; }
.band { fill: #f8f8fb; }
#dots text { font-family: "DejaVu Sans Mono", monospace; fill: #fff; text-anchor: middle; }
#dots .big { stroke: #fff; stroke-width: .3; }
#dots .axis { font-family: "DejaVu Sans", sans-serif; font-size: 17px; fill: #777; }
.pick { fill: none; stroke: #f0dc0a; stroke-width: 2; }
.pick-edge { fill: none; stroke: #756b00; stroke-width: 3.8; }
.zoom { position: absolute; left: 0; top: 386px; display: flex; flex-direction: column; gap: 8px; }
.zoom button { width: 33px; height: 40px; padding: 0 0 0 1px; border: 0; border-radius: 0 3px 3px 0; background: #e6e6e6; box-shadow: 0 2px 2px rgba(0,0,0,.3); }
.zoom svg { width: 24px; height: 24px; fill: none; stroke: #222; stroke-width: 2; }
.info { width: 226px; padding: 8px 0 0 9px; border-left: 1px solid #ccc; background: #fff8f0; }
.info dt { font: 700 14px/20px "Liberation Sans", Arial, sans-serif; color: #a07c64; }
.info dd { font: 13.5px/20px "DejaVu Sans Mono", monospace; color: #333; height: 38px; padding-top: 1px; }
.overview { height: 60px; padding: 10px 20px; background: #fafafa; font-family: "Liberation Sans", Arial, sans-serif; }
.spec { height: 200px; }
.spec h2 { height: 102px; }
.sortlabel { font-size: 12px; line-height: 18px; color: #45437f; }
.sortrow { display: flex; font-size: 16px; line-height: 18px; color: #222; padding-top: 2px; }
.order { width: 222px; padding-top: 2px; }
.check { width: 18px; height: 18px; border: 2px solid #222; border-radius: 2px; }
.rev { margin-left: 9px; width: 108px; padding-top: 1px; }
.search { padding-top: 1px; color: #3e3c80; }

.scroll { width: 15px; margin-left: auto; background: #f1f1f1; display: flex; flex-direction: column; align-items: center; }
.scroll i { border: 4px solid transparent; }
.scroll .up { margin-top: 1px; border-bottom: 5px solid #555; }
.scroll .down { margin: auto 0 0; border-top: 5px solid #555; }
.scroll b { width: 11px; height: 81px; margin-top: 28px; background: #c1c1c1; }
.gear { position: absolute; right: 15px; top: 129px; width: 64px; height: 49px; border-radius: 7px 0 0 7px; background: #a9a9ab; display: flex; align-items: center; justify-content: center; }
.gear svg { width: 31px; height: 31px; }
```
